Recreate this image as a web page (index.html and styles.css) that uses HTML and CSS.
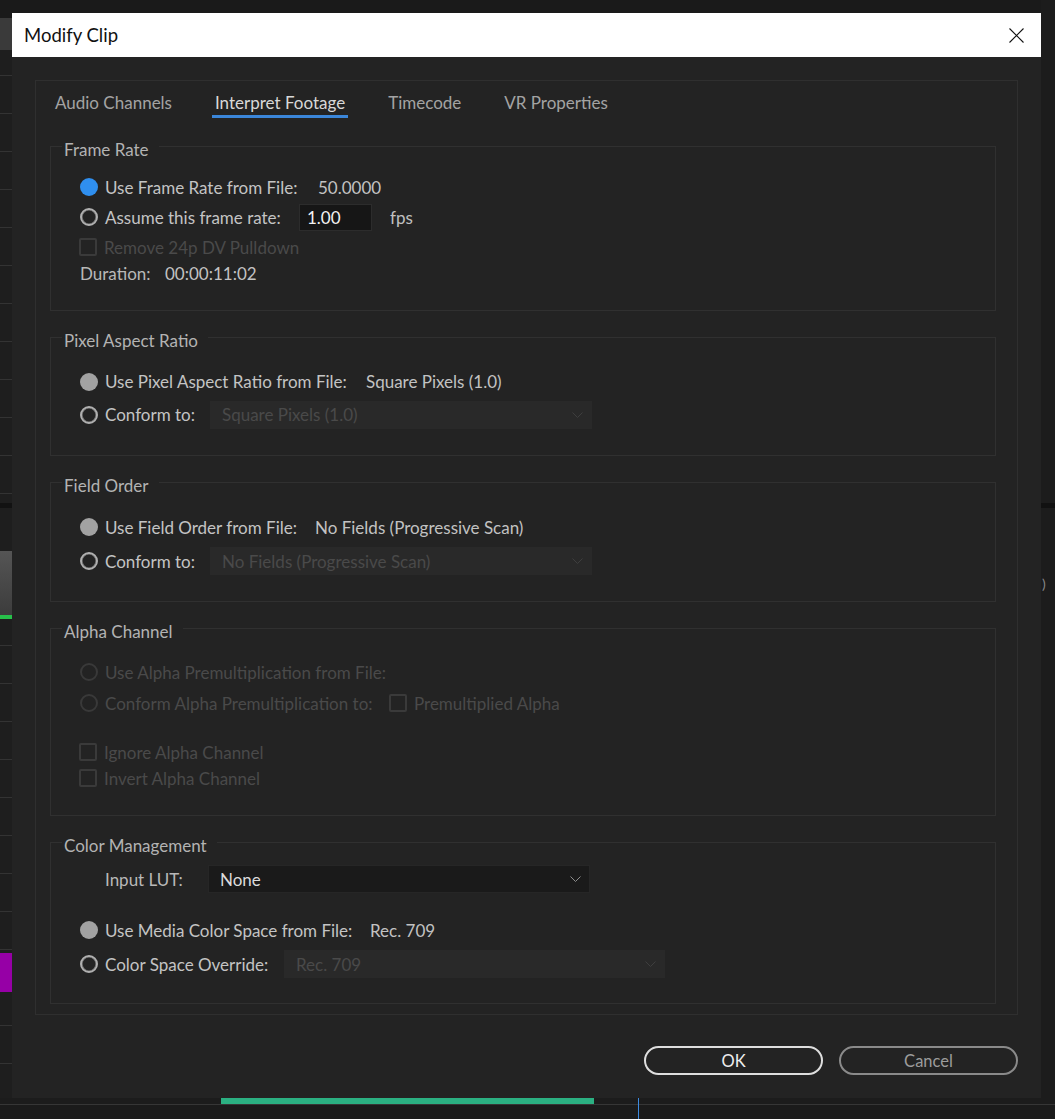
FILE: index.html
```html
<!DOCTYPE html>
<html lang="en">
<head>
    <meta charset="UTF-8">
    <meta name="viewport" content="width=device-width, initial-scale=1.0">
    <title>Modify Clip</title>
    <link rel="stylesheet" href="styles.css">
</head>
<body>
    <div class="app">
        <div class="left-strip">
            <div class="ls-top"></div>
            <div class="ls-head"></div>
            <div class="ls-gap-a"></div>
            <div class="ls-rule"></div>
            <div class="ls-gap-b"></div>
            <div class="ls-thumb"></div>
            <div class="ls-green"></div>
            <div class="ls-gap-c"></div>
            <div class="ls-magenta"></div>
        </div>
        <div class="top-strip"></div>
        <div class="right-strip">
            <div class="rs-gap-a"></div>
            <div class="rs-rule"></div>
            <div class="rs-glyph">)</div>
        </div>

        <div class="dialog">
            <div class="titlebar">
                <span class="title">Modify Clip</span>
                <span class="close">
                    <svg width="15" height="15" viewBox="0 0 15 15"><path d="M0.5 0.5 L14.5 14.5 M14.5 0.5 L0.5 14.5" stroke="#111" stroke-width="1.1" fill="none"/></svg>
                </span>
            </div>

            <div class="panel">
                <div class="tabs">
                    <span class="tab">Audio Channels</span>
                    <span class="tab active">Interpret Footage</span>
                    <span class="tab">Timecode</span>
                    <span class="tab">VR Properties</span>
                </div>

                <!-- Frame Rate -->
                <fieldset class="group fr">
                    <legend>Frame Rate</legend>
                    <div class="row">
                        <span class="radio on"></span>
                        <span class="lbl w213">Use Frame Rate from File:</span>
                        <span class="val">50.0000</span>
                    </div>
                    <div class="row">
                        <span class="radio"></span>
                        <span class="lbl w194">Assume this frame rate:</span>
                        <span class="field">1.00</span>
                        <span class="unit">fps</span>
                    </div>
                    <div class="row">
                        <span class="check"></span>
                        <span class="lbl dim">Remove 24p DV Pulldown</span>
                    </div>
                    <div class="row short">
                        <span class="plain w85">Duration:</span>
                        <span class="val">00:00:11:02</span>
                    </div>
                </fieldset>

                <!-- Pixel Aspect Ratio -->
                <fieldset class="group par">
                    <legend>Pixel Aspect Ratio</legend>
                    <div class="row">
                        <span class="radio set"></span>
                        <span class="lbl w261">Use Pixel Aspect Ratio from File:</span>
                        <span class="val">Square Pixels (1.0)</span>
                    </div>
                    <div class="row">
                        <span class="radio"></span>
                        <span class="lbl w105">Conform to:</span>
                        <span class="select disabled">Square Pixels (1.0)
                            <svg width="11" height="6" viewBox="0 0 11 6"><path d="M0.5 0.5 L5.5 5.5 L10.5 0.5" stroke="#3e3e3e" fill="none"/></svg>
                        </span>
                    </div>
                </fieldset>

                <!-- Field Order -->
                <fieldset class="group fo">
                    <legend>Field Order</legend>
                    <div class="row">
                        <span class="radio set"></span>
                        <span class="lbl w210">Use Field Order from File:</span>
                        <span class="val">No Fields (Progressive Scan)</span>
                    </div>
                    <div class="row">
                        <span class="radio"></span>
                        <span class="lbl w105">Conform to:</span>
                        <span class="select disabled">No Fields (Progressive Scan)
                            <svg width="11" height="6" viewBox="0 0 11 6"><path d="M0.5 0.5 L5.5 5.5 L10.5 0.5" stroke="#3e3e3e" fill="none"/></svg>
                        </span>
                    </div>
                </fieldset>

                <!-- Alpha Channel -->
                <fieldset class="group ac">
                    <legend>Alpha Channel</legend>
                    <div class="row first">
                        <span class="radio off"></span>
                        <span class="lbl dim">Use Alpha Premultiplication from File:</span>
                    </div>
                    <div class="row">
                        <span class="radio off"></span>
                        <span class="lbl dim w285">Conform Alpha Premultiplication to:</span>
                        <span class="check"></span>
                        <span class="lbl dim">Premultiplied Alpha</span>
                    </div>
                    <div class="row slim spaced">
                        <span class="check"></span>
                        <span class="lbl dim">Ignore Alpha Channel</span>
                    </div>
                    <div class="row slim">
                        <span class="check"></span>
                        <span class="lbl dim">Invert Alpha Channel</span>
                    </div>
                </fieldset>

                <!-- Color Management -->
                <fieldset class="group cm">
                    <legend>Color Management</legend>
                    <div class="row lut">
                        <span class="plain w103">Input LUT:</span>
                        <span class="select">None
                            <svg width="11" height="6" viewBox="0 0 11 6"><path d="M0.5 0.5 L5.5 5.5 L10.5 0.5" stroke="#8c8c8c" fill="none"/></svg>
                        </span>
                    </div>
                    <div class="row spaced">
                        <span class="radio set"></span>
                        <span class="lbl w265">Use Media Color Space from File:</span>
                        <span class="val">Rec. 709</span>
                    </div>
                    <div class="row">
                        <span class="radio"></span>
                        <span class="lbl w179">Color Space Override:</span>
                        <span class="select disabled narrow">Rec. 709
                            <svg width="11" height="6" viewBox="0 0 11 6"><path d="M0.5 0.5 L5.5 5.5 L10.5 0.5" stroke="#3e3e3e" fill="none"/></svg>
                        </span>
                    </div>
                </fieldset>
            </div>

            <div class="actions">
                <button class="btn ok">OK</button>
                <button class="btn cancel">Cancel</button>
            </div>
        </div>

        <div class="bottom-strip">
            <div class="bs-gap-a"></div>
            <div class="bs-green"></div>
            <div class="bs-gap-b"></div>
            <div class="bs-cursor"></div>
        </div>
    </div>
</body>
</html>
```

FILE: styles.css
```css
* {
    box-sizing: border-box;
}
body {
    margin: 0;
    background: #1a1a1a;
    font-family: Lato, "Noto Sans", sans-serif;
    font-size: 17px;
    color: #c4c4c4;
    overflow: hidden;
}
.app {
    display: grid;
    grid-template-columns: 12px 1029px 14px;
    grid-template-rows: 13px 1085px 21px;
    width: 1055px;
    height: 1119px;
}

/* background app around the dialog */
.left-strip {
    grid-column: 1;
    grid-row: 1 / 3;
    display: flex;
    flex-direction: column;
    background: repeating-linear-gradient(#1e1e1e 0, #1e1e1e 37px, #333 37px, #333 38px);
}
.ls-top { height: 18px; background: #1a1a1a; }
.ls-head { height: 32px; background: #3a3a3a; }
.ls-gap-a { height: 453px; }
.ls-rule { height: 5px; background: #121212; }
.ls-gap-b { height: 43px; background: #1e1e1e; }
.ls-thumb { height: 64px; background: linear-gradient(#555, #3c3c3c); }
.ls-green { height: 4px; background: #27c04a; }
.ls-gap-c { height: 334px; }
.ls-magenta { height: 39px; background: #9600a6; }

.top-strip {
    grid-column: 2;
    grid-row: 1;
    background: #1a1a1a;
}
.right-strip {
    grid-column: 3;
    grid-row: 1 / 3;
    background: #1c1c1c;
    display: flex;
    flex-direction: column;
}
.rs-gap-a { height: 503px; }
.rs-rule { height: 5px; background: #111; }
.rs-glyph {
    margin-top: 67px;
    padding-left: 1px;
    font-size: 14px;
    color: #888;
}
.bottom-strip {
    grid-column: 1 / 4;
    grid-row: 3;
    display: flex;
    background: linear-gradient(#1c1c1c 6px, #363636 6px, #363636 7px, #1b1b1b 7px);
}
.bs-gap-a { width: 221px; }
.bs-green { width: 373px; height: 6px; background: #2bb082; }
.bs-gap-b { width: 44px; }
.bs-cursor { width: 1px; background: #3d8be0; }

/* dialog */
.dialog {
    grid-column: 2;
    grid-row: 2;
    background: #232323;
    display: flex;
    flex-direction: column;
}
.titlebar {
    height: 44px;
    background: #fff;
    display: flex;
    align-items: center;
    justify-content: space-between;
    padding: 0 17px 0 12px;
}
.title {
    font-size: 18.5px;
    color: #111;
}
.close {
    display: flex;
}
.panel {
    margin: 23px 23px 0;
    border: 1px solid #2f2f2f;
    padding: 0 21px 10px 14px;
}
.tabs {
    display: flex;
    gap: 37px;
    padding: 12px 0 0 2px;
}
.tab {
    padding: 0 3px 2px;
    line-height: 20px;
    border-bottom: 3px solid transparent;
    color: #a3a3a3;
}
.tab.active {
    color: #d8d8d8;
    border-bottom-color: #3b86d9;
}

/* groups */
.group {
    border: 1px solid #303030;
    margin: 15px 0 0;
    padding: 0 0 0 11px;
    min-width: 0;
}
.group legend {
    padding: 6px 10px 0 2px;
    line-height: 17px;
    color: #b3b3b3;
}
.row {
    display: flex;
    align-items: center;
    padding-left: 18px;
}
.fr { margin-top: 17px; padding-top: 14px; padding-bottom: 26px; }
.fr .row { height: 30px; }
.fr .row.short { height: 22px; }
.par { padding-top: 16px; padding-bottom: 24px; }
.par .row { height: 33px; }
.fo { padding-top: 16px; padding-bottom: 23px; }
.fo .row { height: 34px; }
.ac { padding-top: 16px; padding-bottom: 24px; }
.ac .row { height: 30px; }
.ac .row.first { height: 32px; }
.ac .row.slim { height: 26px; }
.ac .row.spaced { margin-top: 21px; }
.cm { padding-top: 11px; padding-bottom: 22px; }
.cm .row { height: 34px; }
.cm .row.lut { height: 28px; padding-left: 43px; }
.cm .row.spaced { margin-top: 20px; }

.radio {
    width: 18px;
    height: 18px;
    border-radius: 50%;
    border: 2px solid #b0b0b0;
    box-shadow: inset 0 0 0 0.6px rgba(176, 176, 176, 0.6);
    margin-right: 7px;
    flex: none;
}
.radio.on { border: none; box-shadow: none; background: #2f8fef; }
.radio.set { border: none; box-shadow: none; background: #a2a2a2; }
.radio.off { border-color: #393939; box-shadow: none; }
.check {
    width: 18px;
    height: 18px;
    border: 2px solid #3a3a3a;
    border-radius: 2px;
    margin: 0 7px 0 -1px;
    flex: none;
}
.lbl {
    color: #c4c4c4;
    white-space: nowrap;
}
.lbl.dim { color: #4a4a4a; }
.plain { color: #b8b8b8; }
.val { color: #c2c2c2; white-space: nowrap; }
.w85 { width: 85px; }
.w103 { width: 103px; }
.w105 { width: 105px; }
.w179 { width: 179px; }
.w194 { width: 194px; }
.w210 { width: 210px; }
.w213 { width: 213px; }
.w261 { width: 261px; }
.w265 { width: 265px; }
.w285 { width: 285px; }

.field {
    width: 73px;
    height: 27px;
    background: #161616;
    border: 1px solid #2c2c2c;
    color: #f2f2f2;
    padding-left: 7px;
    line-height: 25px;
}
.unit {
    margin-left: 18px;
    color: #c0c0c0;
}
.select {
    width: 382px;
    height: 28px;
    background: #1a1a1a;
    border: 1px solid #262626;
    display: flex;
    align-items: center;
    justify-content: space-between;
    padding: 0 8px 0 11px;
    color: #dcdcdc;
}
.select.disabled {
    background: #292929;
    border-color: #292929;
    color: #4a4a4a;
}
.select.narrow { width: 381px; }

/* buttons */
.actions {
    display: flex;
    justify-content: flex-end;
    gap: 16px;
    margin: 31px 23px 0 0;
}
.btn {
    width: 179px;
    height: 29px;
    border-radius: 15px;
    background: transparent;
    font-family: Lato, "Noto Sans", sans-serif;
    font-size: 16.5px;
    padding: 0;
}
.btn.ok {
    border: 2px solid #dedede;
    color: #eeeeee;
}
.btn.cancel {
    border: 2px solid #8a8a8a;
    color: #9c9c9c;
}
```
